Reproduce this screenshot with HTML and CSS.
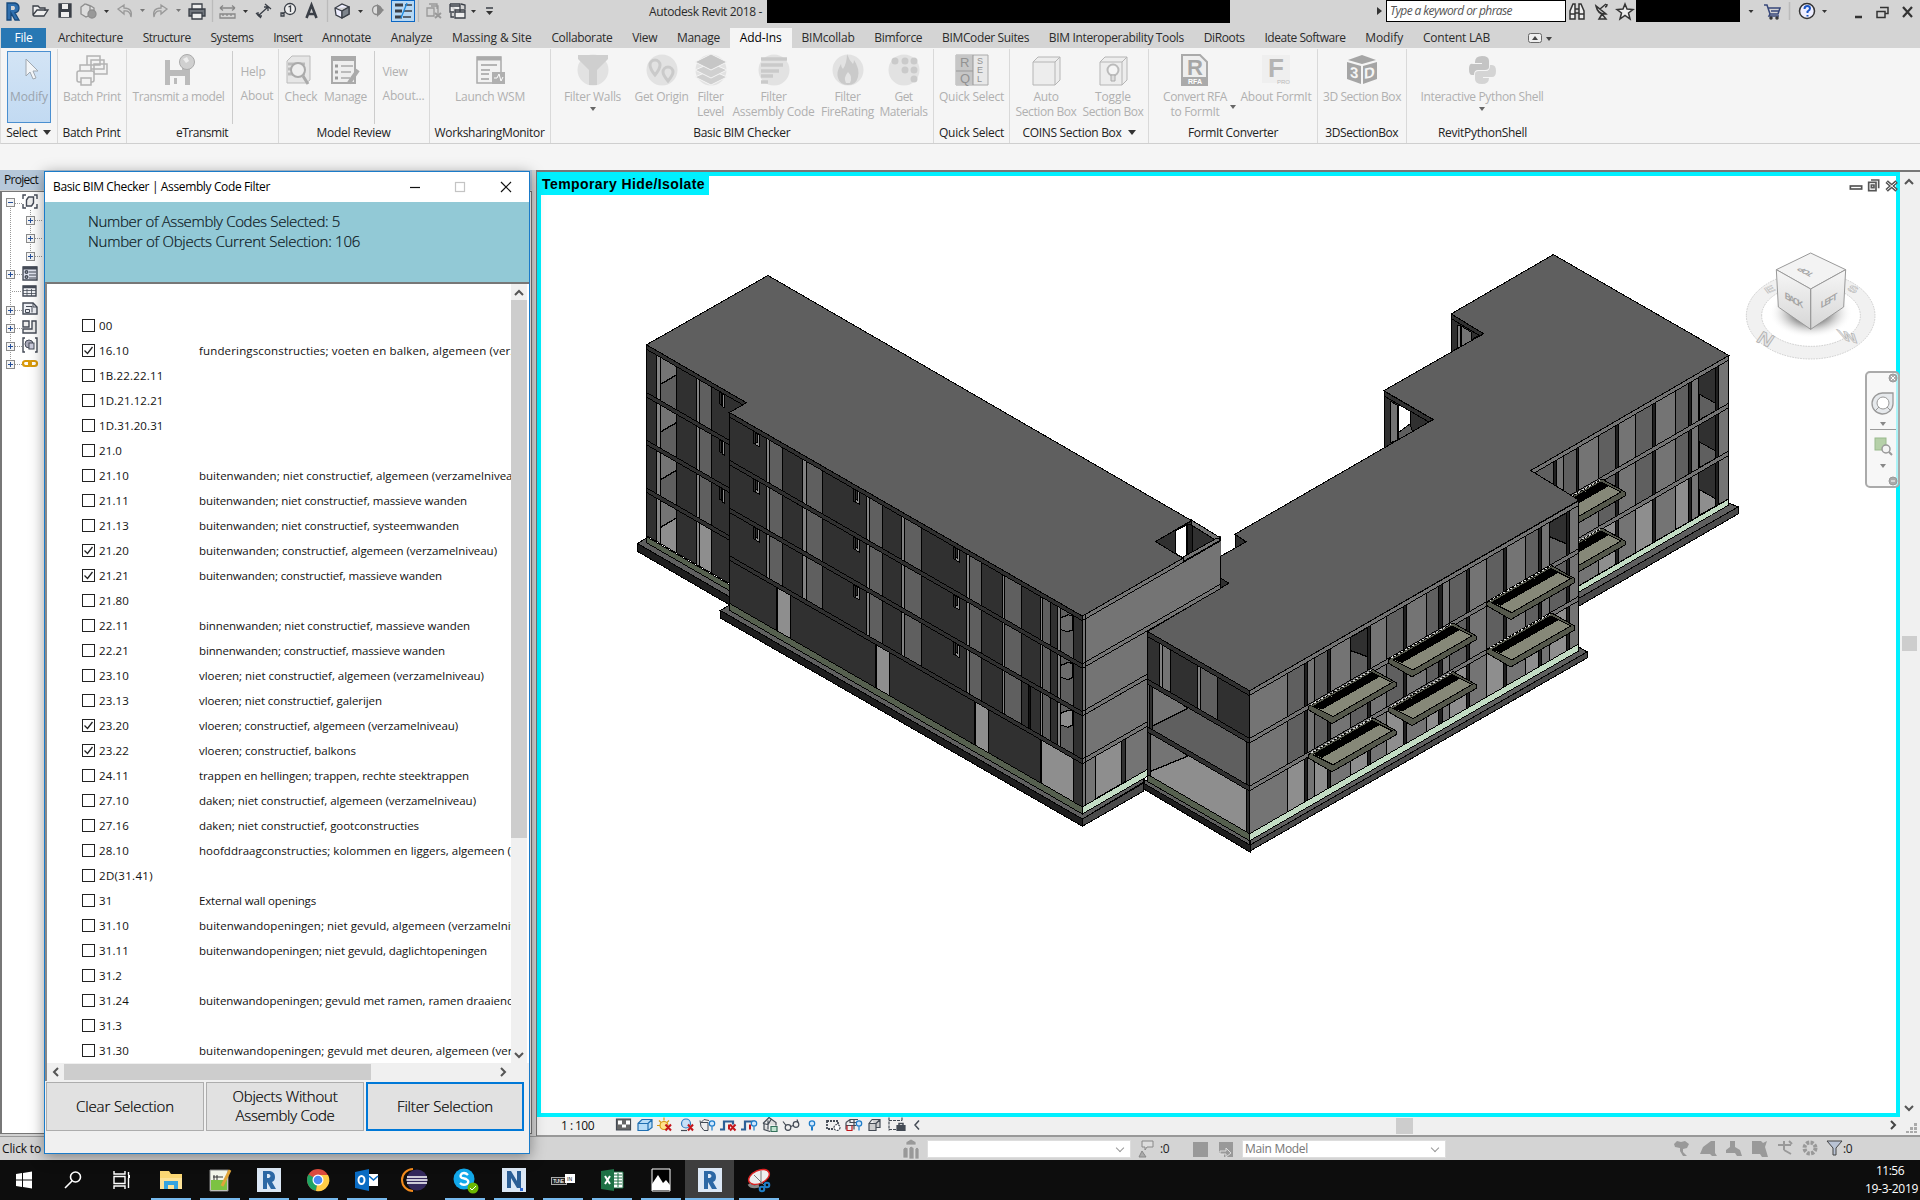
FILE: index.html
```html
<!DOCTYPE html>
<html lang="en">
<head>
<meta charset="utf-8">
<title>Autodesk Revit 2018</title>
<link rel="stylesheet" href="styles.css">
</head>
<body>
<header class="titlebar">
  <svg class="qat" width="510" height="28" viewBox="0 0 510 28" fill="none" stroke="#3a3f47" stroke-width="1.3">
    <path d="M7 3h8q4 1 4 5t-4 5l4 7h-4l-4-7v7H7z" fill="#2f6fae" stroke="#17497c"/><path d="M11 6h3q2 2 0 4h-3z" fill="#d4d4d4" stroke="none"/>
    <path d="M33 15V6h5l2 2h5v3M33 15l4-5h11l-4 6H34z" fill="#eee"/>
    <path d="M59 4h12v13H59z" fill="#3a3f47"/><path d="M62 4h6v5h-6zM61 12h8v5h-8z" fill="#eee" stroke="none"/>
    <g stroke="#8d8d8d"><path d="M81 7l4-3 5 2v9l-4 2-5-3zM86 4l5 2 3 2v8" fill="#ddd"/><circle cx="92" cy="14" r="4" fill="#999"/></g>
    <path d="M104 10h5l-2.500 3z" fill="#333" stroke="none"/>
    <path d="M124 5l-6 4 6 5v-3q6-1 7 6 2-9-7-9z" stroke="#999"/><path d="M140 9h5l-2.500 3z" fill="#777" stroke="none"/>
    <path d="M161 5l6 4-6 5v-3q-6-1-7 6-2-9 7-9z" stroke="#999"/><path d="M176 9h5l-2.500 3z" fill="#777" stroke="none"/>
    <path d="M189 9h16v7h-16z" fill="#70757c"/><path d="M192 4h10v5h-10zM192 13h10v6h-10z" fill="#eee"/>
    <path d="M212.500 0v22M327.500 0v22M418.500 0v22" stroke="#bbb"/>
    <g stroke="#888"><path d="M220 8h15M220 8l3-2.500M220 8l3 2.500M235 8l-3-2.500M235 8l-3 2.500M220 14h15v4h-15zM223 14v2M227 14v2M231 14v2"/></g><path d="M243 10h5l-2.500 3z" fill="#333" stroke="none"/>
    <path d="M258 16l10-9M256 13l5 5M265 4l6 5M258 16v-4M258 16h4M268 7h-4M268 7v4"/>
    <circle cx="290" cy="9" r="5.500" fill="#eee"/><path d="M288.500 7l2-1v6M285 12l-3 2M281 13v3h3v-3z" />
    <path d="M306.500 18l5-13 5 13M308.500 14h6" stroke-width="2.600"/>
    <path d="M335 8l7-4 7 3v7l-7 4-6-3zM335 8l7 3 7-4M342 11v7" fill="#eef"/><path d="M342 11l7-4v7l-7 4z" fill="#7d848c"/><path d="M358 10h5l-2.500 3z" fill="#333" stroke="none"/>
    <circle cx="377" cy="10" r="4.500" stroke="#888" fill="#ddd"/><path d="M377 4l7 6-7 7z" fill="#888" stroke="none"/>
    <rect x="391.500" y=".5" width="23" height="21" fill="#b5d7f3" stroke="#0b66c3" stroke-width="1"/><path d="M395 5h8M395 11h7M395 17h7" stroke-width="3"/><path d="M405 5h7M404 11h8M403 17h8"/><path d="M407 3l-6 15" stroke="#1989e0"/>
    <g stroke="#999"><path d="M429 4h8v5M427 8h7v8h-7zM431 6h7v8"/><path d="M435 13l6 5M441 13l-6 5" stroke-width="2"/></g>
    <path d="M450 4h10v8M450 4v8h4M455 10h10v8h-10zM450 6h10M455 12h10" fill="#eee"/><path d="M461 4l4 1v4M451 13v4h3"/><path d="M471 10h5l-2.500 3z" fill="#333" stroke="none"/>
    <path d="M486 8h7" stroke-width="1.500"/><path d="M486 11h7l-3.500 4z" fill="#333" stroke="none"/>
  </svg>
  <span class="apptitle"><span data-w="113">Autodesk Revit 2018 -</span></span>
  <span class="mask mask-doc"></span>
  <i class="more"></i>
  <span class="search"><em data-w="122">Type a keyword or phrase</em></span>
  <svg class="help" width="70" height="28" viewBox="1566 0 70 28" fill="none" stroke="#333" stroke-width="1.500">
    <path d="M1570 19v-8l3-7h2v15zM1579 19V4h2l3 7v8zM1575 9h4M1575 13h4M1570 14h5M1579 14h5" fill="#eee"/>
    <path d="M1596 6q2 9 10 8zM1600 9l6-5M1602 14l-3 5h7zM1605 7q2 0 2-3"/>
    <path d="M1625 4l2 5 6 .5-4.500 3.500 1.500 6-5-3.500-5 3.500 1.500-6-4.500-3.500 6-.5z" fill="#eee"/>
  </svg>
  <span class="mask mask-user"></span>
  <svg class="syst" width="180" height="28" viewBox="1740 0 180 28" fill="none" stroke="#333" stroke-width="1.500">
    <path d="M1748.500 10h5l-2.500 3z" fill="#333" stroke="none"/>
    <path d="M1764 5h3l3 9h8l2-6h-12M1770 14l-1 2h10M1771 11h8" stroke="#37477a"/><circle cx="1771" cy="18" r="1" fill="#37477a"/><circle cx="1777" cy="18" r="1"/>
    <path d="M1789.500 2v18" stroke="#bbb"/><circle cx="1807" cy="11" r="7.500" fill="#eef"/><path d="M1804.500 9q0-3 3-3 2.500 0 2.500 2.500 0 1.500-2.500 3v1.500M1807.500 15v1.500" stroke="#1b56c4" stroke-width="2"/>
    <path d="M1822 10h5l-2.500 3z" fill="#333" stroke="none"/><path d="M1855 17h7" stroke-width="2.500"/>
    <path d="M1880 7.500h8v6h-3M1877 11.500h8v6h-8z"/><path d="M1903 7l9 10M1912 7l-9 10" stroke-width="2.200"/>
  </svg>
</header>
<nav class="tabs" id="tabs"></nav>
<section class="ribbon" id="ribbon"></section>
<div class="optionsbar"></div>

<main class="work">
  <aside class="browser">
    <div class="browser-head"><span data-w="34">Project</span></div>
    <div class="browser-body">
      <svg width="42" height="190" viewBox="2 192 42 190" fill="none" stroke="#454b57" stroke-width="1.400" shape-rendering="crispEdges">
        <path d="M10.500 208v158M15 203h7M15 274h7M12 291h9M15 310h7M15 328h7M15 346h7M15 364h7M30.500 210v46M35 220h8M35 238h8M35 256h8" stroke="#999" stroke-dasharray="1 1" stroke-width="1"/>
        <g id="nodes"></g>
        <g shape-rendering="auto"><path d="M23 199v-4h3M34 195h3v4M23 204v4h3M34 208h3v-4"/><path d="M26.500 200l2-3h5v6l-2 3h-5z" fill="#eee"/>
        <path d="M23 267h14v13H23z" fill="#dfe2ee"/><path d="M23 268h14" stroke-width="3"/><circle cx="26.500" cy="272" r="1.300"/><circle cx="26.500" cy="277" r="1.300"/><path d="M29 272h7M29 275h7M29 278h7" stroke-width="1"/>
        <path d="M23 286h13v10H23z" fill="#f1f2f6"/><path d="M23 287h13" stroke-width="2.500"/><path d="M23 290.500h13M23 293.500h13M27 289v7M31.500 289v7" stroke-width=".8"/>
        <path d="M23 303h10l4 4v7H23z" fill="#eef0f5"/><path d="M25.500 309.500h4v3h-4zM26 306.500h6v6" stroke-width="1"/><path d="M33 303v4h4" stroke-width="1"/><path d="M23 321h6v6h-6zM32 321h4v12H23v-4h9z" fill="#eee"/>
        <path d="M25 338h-2v14h2M35 338h2v14h-2"/><circle cx="29" cy="344" r="4" fill="#aab" stroke-width="1"/><rect x="29" y="343" width="5" height="6" fill="#ccd" stroke-width="1"/></g>
        <g stroke="#d99a0b" stroke-width="2.200" shape-rendering="auto"><rect x="23" y="361" width="8" height="5" rx="2.500"/><rect x="29" y="361" width="8" height="5" rx="2.500"/></g>
      </svg>
    </div>
  </aside>
  <section class="view">
    <div class="canvas-row">
      <div class="canvas">
        <svg id="model" width="1356" height="937" viewBox="541 176 1356 937" shape-rendering="crispEdges"></svg>
        <span class="isolate"><b data-w="163">Temporary Hide/Isolate</b></span>
        <svg class="cube" width="240" height="170" viewBox="0 0 720 510">
          <defs><radialGradient id="sh"><stop offset=".4" stop-color="#888"/><stop offset="1" stop-color="#fff" stop-opacity="0"/></radialGradient>
          <linearGradient id="fc" x2="0" y2="1"><stop stop-color="#f6f6f6"/><stop offset="1" stop-color="#d6d6d6"/></linearGradient></defs>
          <g transform="translate(0,-130)">
          <g fill="none" stroke="#555" stroke-width="5"><rect x="511" y="79" width="34" height="9"/><rect x="566" y="68" width="22" height="25"/><path d="M573 61h23v25M574 76h8v8h-8z"/><path d="M620 66l30 26M650 66l-30 26" stroke-width="11"/><path d="M622 68l26 22M648 68l-26 22" stroke="#fff" stroke-width="3"/></g>
          <path d="M199 468a193 130 0 1 0 386 0a193 130 0 1 0-386 0zM245 468a148 92 0 1 1 296 0a148 92 0 1 1-296 0z" fill="#f1f1f1" stroke="#bbb" stroke-width="2" stroke-dasharray="5 3" fill-rule="evenodd"/>
          <ellipse cx="392" cy="460" rx="125" ry="75" fill="url(#sh)"/>
          <g class="compass"><text transform="matrix(1 .45 -.55 .8 226 545)">N</text><text transform="matrix(1 .25 .5 .8 488 540)">W</text><text transform="matrix(.7 -.3 .3 .4 262 402)">E</text><text transform="matrix(.7 .3 -.3 .4 500 390)">S</text></g>
          <g stroke="#999" stroke-width="3"><path d="M392 280l105 50-105 58-103-58z" fill="#f3f3f3"/><path d="M289 330l103 58v121l-97-67zM497 330l-105 58v121l99-67z" fill="url(#fc)"/></g>
          <g class="face"><text transform="matrix(.9 .5 0 1 314 416)" textLength="62">BACK</text><text transform="matrix(.9 -.5 0 1 422 446)" textLength="56">LEFT</text><text transform="matrix(-.8 -.42 .8 -.42 404 343)" textLength="50">TOP</text></g></g>
        </svg>
        <svg class="navbar" width="36" height="118" viewBox="0 0 36 118" fill="none" stroke="#999">
          <rect x="1" y="1" width="33" height="115" rx="4" fill="#f4f4f4" fill-opacity=".7" stroke="#aaa" stroke-width="2"/>
          <circle cx="28" cy="7" r="4" fill="#aaa"/><path d="M26 5l4 4M30 5l-4 4" stroke="#fff"/><circle cx="28" cy="110" r="4" fill="#aaa"/><path d="M26 110h4" stroke="#fff"/>
          <path d="M18 22h10v11a10.500 10.500 0 1 1-10-11z" fill="#e6e9ec" stroke-width="1.300"/><circle cx="18" cy="32" r="6" fill="#fff"/><path d="M14 36l-4 4M22 36l4 4"/>
          <path d="M15 51h6l-3 4zM15 93h6l-3 4z" fill="#888" stroke="none"/><path d="M5 58.500h26"/><rect x="10" y="67" width="11" height="12" fill="#b5d0a8" stroke="#9aba8d"/><circle cx="21" cy="78" r="4" fill="#f4f4f4" stroke-width="1.500"/><path d="M24 81l3 3" stroke-width="2"/>
        </svg>
      </div>
      <div class="vscroll"><svg width="20" height="945" viewBox="0 0 20 945" fill="none" stroke="#555" stroke-width="2"><path d="M5 12l4-4 4 4M5 934l4 4 4-4"/><rect x="2" y="464" width="15" height="15" fill="#cdcdcd" stroke="none"/></svg></div>
    </div>
    <div class="viewctl">
      <span class="scale"><span data-w="33">1 : 100</span></span>
      <svg width="320" height="18" viewBox="610 1116.500 320 18" fill="none" stroke="#444b55" stroke-width="1.200">
        <path d="M616.500 1118.500h14v11h-14z" fill="#666"/><path d="M618 1120h4v4h-4zM626 1120h4v4h-4zM622 1124h4v3h-4z" fill="#fff" stroke="none"/>
        <path d="M638 1123l4-4h10v8l-4 3h-10zM638 1123h10v7M648 1123l4-4" fill="#b7dcf7" stroke="#1f6fb2"/>
        <circle cx="664" cy="1125" r="4" fill="#ffe28a" stroke="#d79a12"/><path d="M664 1117v3M657 1125h3M659 1120l2 2M669 1120l-2 2" stroke="#d79a12"/>
        <circle cx="686" cy="1123" r="4.500" fill="#c8e0f7" stroke="#2c7ac0"/><path d="M681 1130h6"/>
        <path d="M700 1120l1 6 3 4h4v-8h-7l3-3 5 1" fill="#eee" stroke-width="1"/><path d="M720 1129h4v-8h9v3M741 1129h4v-8h9v3" stroke="#2c5f96" stroke-width="2.200"/><path d="M729 1129v-5M750 1129v-5" stroke="#c4161c" stroke-width="2"/>
        <g stroke="#c4161c" stroke-width="2"><path d="M665.500 1124l5.500 6M671 1124l-5.500 6M688 1124l5 6M693 1124l-5 6M730 1124l5.500 6M735.500 1124l-5.500 6"/></g>
        <g stroke="#1c7cc9" fill="#cfe8ff"><circle cx="712" cy="1123" r="2.700"/><path d="M712 1126v4"/><circle cx="754" cy="1123" r="2.700"/><path d="M754 1126v4"/><circle cx="812" cy="1123" r="2.700"/><path d="M812 1126v4" stroke-width="2"/></g>
        <path d="M763 1123l6-6 7 5v3M764 1123v6l6 2M768 1120v9M763 1123l5 1 3-5" fill="#ddd"/><path d="M771 1126h6v5h-6z" fill="#bfe3cf" stroke="#33705a"/>
        <circle cx="788" cy="1127" r="2.800"/><circle cx="796" cy="1124" r="2.800"/><path d="M783 1121l3 4M798 1122l-1-3M791 1126l2-1"/>
        <path d="M827 1120.500h11v8h-11z" stroke-dasharray="2 1" stroke-width="1.800"/><circle cx="837" cy="1127" r="3" fill="#fff" stroke-dasharray="2 1"/>
        <path d="M846 1122l4-3h8M846 1122v7M850 1119v3h8M854 1119v10M846 1125h10" /><path d="M847 1125v5h5v-5" stroke="#c4161c"/><circle cx="859" cy="1123" r="2.700" fill="#cfe8ff" stroke="#1c7cc9"/><path d="M859 1126v4" stroke="#1c7cc9"/>
        <path d="M869 1123h7v7h-7zM872 1119h8v8h-4M869 1123l3-4M876 1123l4-4" fill="#ccc"/>
        <path d="M889 1117v13M889 1120h13M902 1117v4M889 1129h7" stroke-dasharray="3 1"/><path d="M897 1125h8v5h-8z" fill="#444b55"/><path d="M899 1125v-2h4v2M919 1120l-4 4.500 4 4.500" stroke-width="1.500"/>
      </svg>
      <span class="hthumb"></span>
      <svg class="grip" width="30" height="18" fill="#aaa"><path d="M1 4l4 4-4 4" fill="none" stroke="#444" stroke-width="2"/><path d="M24 6h3v3h-3zM20 10h3v3h-3zM24 10h3v3h-3zM16 14h3v2h-3zM20 14h3v2h-3zM24 14h3v2h-3z"/></svg>
    </div>
  </section>

  <div class="dialog">
    <div class="dlg-title"><span data-w="217">Basic BIM Checker | Assembly Code Filter</span>
      <svg width="110" height="20" fill="none" stroke="#111" stroke-width="1.200"><path d="M3 10.500h10"/><rect x="48.500" y="5.500" width="9" height="9" stroke="#c4c4c4"/><path d="M94 5l10 10M104 5l-10 10"/></svg></div>
    <div class="dlg-info"><p><span data-w="252">Number of Assembly Codes Selected: 5</span></p><p><span data-w="272">Number of Objects Current Selection: 106</span></p></div>
    <div class="dlg-list">
      <div class="rows" id="rows"></div>
      <div class="lv"><svg width="16" height="16"><path d="M4 11l4-4 4 4" fill="none" stroke="#555" stroke-width="2"/></svg><span class="lthumb"></span><svg width="16" height="16"><path d="M4 6l4 4 4-4" fill="none" stroke="#555" stroke-width="2"/></svg></div>
    </div>
    <div class="lh"><svg width="17" height="16"><path d="M11 4L7 8l4 4" fill="none" stroke="#555" stroke-width="2"/></svg><span></span><svg class="end" width="17" height="16"><path d="M6 4l4 4-4 4" fill="none" stroke="#555" stroke-width="2"/></svg></div>
    <div class="dlg-buttons"><button><span data-w="98">Clear Selection</span></button><button><span data-w="105">Objects Without</span><br><span data-w="99">Assembly Code</span></button><button class="default"><span data-w="96">Filter Selection</span></button></div>
  </div>
</main>

<footer class="status">
  <span class="hint"><span data-w="39">Click to</span></span>
  <svg class="s1" width="18" height="22" viewBox="0 0 18 22" fill="#999" stroke="#ddd" stroke-width=".7"><path d="M1 11l2-2 3 1v10H1zM7 10l2-2 3 2v11H7zM13 11l2-2 2 2v10h-4z"/><path d="M4 4l5-3 5 3v3H4z"/></svg>
  <span class="combo c1"><i></i></span>
  <svg class="s2" width="18" height="22" fill="#aaa" stroke="#888"><path d="M4 3h11v6H9l-2 3V9H4z" fill="#ddd"/><path d="M1 19l3-6 4 6z"/></svg>
  <span class="zero">:0</span>
  <svg class="s3" width="46" height="22" fill="#999"><path d="M1 4h15v15H1zM27 4h14v15h-9v-4h-5z"/><path d="M28 13h6v-3l5 5-5 4v-3h-6z" stroke="#ddd"/></svg>
  <span class="combo c2"><span data-w="63">Main Model</span><i></i></span>
  <svg class="s4" width="172" height="22" viewBox="1674 1138 172 22" fill="#999"><path d="M1675 1144l3-3 4 1 4-1 4 3-2 4-4 1v3l4 4h-4l-3-5v-3l-5-1zM1701 1154l3-7 8-6h4v12l2 3h-5l-2-2zM1727 1150l4-3v-6h5v6l5 3 2 6h-5l-2-3h-9zM1753 1141h9l2 2 4-2-2 6 3 10h-6l-2-3h-8z"/><path d="M1779 1145h13M1785 1141v9M1790 1141l3 3M1785 1150l7 4" stroke="#999" stroke-width="2"/><circle cx="1811" cy="1148" r="5.500" fill="none" stroke="#999" stroke-width="4" stroke-dasharray="3 1.300"/><path d="M1828 1141h15l-6 7v7h-3v-7z" fill="#b9c3d4" stroke="#444"/></svg>
  <span class="zero">:0</span>
</footer>

<footer class="taskbar">
  <span class="app"><svg viewBox="0 0 40 40" fill="#fff"><path d="M12 14l6-1v6.500h-6zM19 13l9-1.500v8h-9zM12 20.500h6V27l-6-1zM19 20.500h9v8L19 27z"/></svg></span>
  <span class="app"><svg viewBox="0 0 40 40" fill="none" stroke="#fff" stroke-width="1.600"><circle cx="22.500" cy="17" r="5"/><path d="M19 21l-7 7"/></svg></span>
  <span class="app"><svg viewBox="0 0 40 40" fill="none" stroke="#fff" stroke-width="1.400"><path d="M12 11v3h11v-3M12 16.500h11v7H12zM12 29v-3h11v3M26.500 12v3M26.500 18v10" /><path d="M26 16.500h2" stroke-width="3"/></svg></span>
  <span class="app open"><svg viewBox="0 0 40 40"><path d="M9 11h9l2 3h11v15H9z" fill="#fbd774"/><path d="M9 18h22v11H9z" fill="#fde398"/><path d="M13 29v-8h14v8h-4v-4h-6v4z" fill="#35a4e0"/></svg></span>
  <span class="app open"><svg viewBox="0 0 40 40"><path d="M10 10h18v21H10z" fill="#f3f6ea" stroke="#888"/><path d="M11 20h16v10H11z" fill="#7cc242"/><path d="M13 17h10M14 15v5M17 15v5" stroke="#333"/><path d="M22 26l8-16" stroke="#e0a53a" stroke-width="3"/></svg></span>
  <span class="app open"><svg viewBox="0 0 40 40"><path d="M8 8h24v24H8z" fill="#dce8f6"/><path d="M14 11h7q5 1 5 6 0 4-3 5l4 7h-5l-4-7v7h-4z" fill="#2c68a5"/><path d="M18 14h2q3 2 0 4h-2z" fill="#dce8f6"/></svg></span>
  <span class="app open"><svg viewBox="0 0 40 40"><circle cx="20" cy="20" r="11" fill="#dd4b3e"/><path d="M20 20l-9.500-5.500A11 11 0 0 0 18 30.800z" fill="#1da462"/><path d="M20 20l-2 10.900A11 11 0 0 0 30 15H20z" fill="#ffcd46"/><circle cx="20" cy="20" r="5.500" fill="#fff"/><circle cx="20" cy="20" r="4.300" fill="#4a8af4"/></svg></span>
  <span class="app open"><svg viewBox="0 0 40 40"><path d="M8 12l14-3v22L8 28z" fill="#0a6cc4"/><path d="M22 14h9v12h-9z" fill="#fff"/><path d="M22 16l4.500 4 4.500-4" stroke="#0a6cc4" stroke-width="1.600" fill="none"/><ellipse cx="14.500" cy="20" rx="3" ry="4" fill="none" stroke="#fff" stroke-width="2"/></svg></span>
  <span class="app"><svg viewBox="0 0 40 40"><path d="M17 9a11 11 0 0 0 0 22" fill="none" stroke="#f28a1c" stroke-width="2"/><circle cx="21" cy="20" r="10.500" fill="#33285c"/><path d="M11 17h20M10.500 20h21M11 23h20" stroke="#fff" stroke-width="1.700"/></svg></span>
  <span class="app open"><svg viewBox="0 0 40 40"><circle cx="19" cy="19" r="10.500" fill="#12a8ea"/><path d="M23 15q-3-3-6-1.500-3 2.500 0 4.500l4 1q4 2 1 5-4 2-7-1" stroke="#fff" stroke-width="2.400" fill="none"/><circle cx="28" cy="28" r="5.500" fill="#6bb700"/><path d="M25 28l2 2 4-4" stroke="#fff" fill="none"/></svg></span>
  <span class="app open"><svg viewBox="0 0 40 40"><path d="M8 8h24v24H8z" fill="#dce8f6"/><path d="M13 28V11h4l6 10V11h4v17h-4l-6-10v10z" fill="#2c5f96"/><path d="M26 28h3v3h-3z" fill="#2c68d5"/></svg></span>
  <span class="app open"><svg viewBox="0 0 40 40"><rect x="8.500" y="17.500" width="15" height="7" fill="#222" stroke="#aaa"/><rect x="22" y="14" width="10" height="9" fill="#fff"/><text x="10" y="23.200" font-size="5" fill="#fff" textLength="11">TUNE</text><text x="24" y="20.500" font-size="5">IN</text></svg></span>
  <span class="app open"><svg viewBox="0 0 40 40"><path d="M20 12h11v16H20z" fill="#fff" stroke="#1e7145"/><path d="M22 15h8M22 18h8M22 21h8M22 24h8M26 13v14" stroke="#1e7145"/><path d="M9 11l13-2v22L9 29z" fill="#1e7145"/><path d="M13 16l5 8M18 16l-5 8" stroke="#fff" stroke-width="2"/></svg></span>
  <span class="app open"><svg viewBox="0 0 40 40"><path d="M11 9h18v22H11z" fill="#000" stroke="#fff"/><path d="M11 30V24l6-9 5 8 3-3 4 5v5z" fill="#fff"/></svg></span>
  <span class="app open active"><svg viewBox="0 0 40 40"><path d="M8 8h24v24H8z" fill="#dce8f6"/><path d="M14 11h7q5 1 5 6 0 4-3 5l4 7h-5l-4-7v7h-4z" fill="#2c68a5"/><path d="M18 14h2q3 2 0 4h-2z" fill="#dce8f6"/></svg></span>
  <span class="app open"><svg viewBox="0 0 40 40"><ellipse cx="20" cy="17" rx="11" ry="6.500" transform="rotate(-25 20 17)" fill="#eee" stroke="#d22" stroke-width="1.500"/><path d="M10 24q2 4 10 2" stroke="#888" stroke-width="3" fill="none"/><path d="M15 15l10 10M22 11v13" stroke="#777"/><circle cx="23" cy="29" r="2.300" fill="none" stroke="#1f7fc9" stroke-width="2"/><circle cx="28" cy="25" r="2.300" fill="none" stroke="#1f7fc9" stroke-width="2"/></svg></span>
  <div class="clock"><span data-w="28">11:56</span><span data-w="53">19-3-2019</span></div>
</footer>
<script src="app.js"></script>
</body>
</html>
```
FILE: styles.css
```css
* { box-sizing: border-box; }
body { margin: 0; width: 1920px; height: 1200px; overflow: hidden; display: flex; flex-direction: column; font: 12px/16px "Open Sans", "Noto Sans", sans-serif; color: #2b2b2b; background: #f5f5f5; }
svg { display: block; flex: none; }
[data-w] { white-space: nowrap; display: inline-block; }
.titlebar { height: 28px; background: #d4d4d4; display: flex; align-items: flex-start; }
.apptitle { margin-left: 139px; width: 118px; padding-top: 4px; }
.mask { background: #000; height: 23px; flex: none; }
.mask-doc { width: 463px; }
.mask-user { width: 104px; height: 22px; }
.more { margin: 7px 3px 0 147px; border-left: 5px solid #333; border-top: 4px solid transparent; border-bottom: 4px solid transparent; }
.titlebar .search { width: 180px; height: 22px; border: 1px solid #000; background: #fff; padding: 2px 3px; color: #555; margin-left: 1px; flex: none; }
.tabs { height: 20px; background: #d4d4d4; display: flex; padding-left: 1px; }
.tab { padding: 2px 9.900px 0; height: 20px; flex: none; }
.tab.file { background: #2878b4; color: #fff; width: 45px; text-align: center; margin-right: 2px; }
.tab.active { background: #f5f5f5; color: #000; }
.tab-more { margin: 4px 0 0 28px; }
.ribbon { height: 96px; display: flex; border-bottom: 1px solid #cfcfcf; border-left: 1px solid #ddd; }
.panel { height: 94px; margin-top: 1px; border-right: 1px solid #d9d9d9; flex: none; display: flex; flex-direction: column; }
.panel:last-child { border: 0; }
.tools { height: 75px; display: flex; }
.panel-title { text-align: center; height: 19px; line-height: 17px; color: #222; }
.tool { flex: none; color: #b0b0b0; display: flex; flex-direction: column; align-items: center; line-height: 15px; padding-top: 5px; text-align: center; white-space: nowrap; }
.tool svg { margin-bottom: 3px; }
.tool.selected { border: 1px solid #4a8fd0; background: linear-gradient(#d3e4f5, #c2daf2); margin: 2px 0 1px 6px; padding-top: 2px; color: #9aa4ae; }
.stack { border-left: 1px solid #ccc; margin-top: 2px; padding: 13px 0 0 8px; color: #b0b0b0; display: flex; flex-direction: column; align-items: flex-start; gap: 8px; }
.caret { display: inline-block; border-top: 4px solid #666; border-left: 3px solid transparent; border-right: 3px solid transparent; }
.panel-title .caret { border-width: 5px 4px 0; border-top-color: #333; margin: 0 0 2px 6px; }
.tool .caret { margin-top: 3px; }
.optionsbar { height: 26px; }
.work { height: 966px; display: flex; position: relative; }
.browser { width: 537px; background: #d2d2d2; border-right: 1px solid #777; padding-right: 4px; }
.browser-head { height: 20px; background: #b6c8da; padding: 2px 0 0 4px; color: #111; }
.browser-body { height: 943px; margin-top: 1px; background: #fff; border: 1px solid #777; border-left-width: 2px; }
.view { flex: 1; border-top: 2px solid #777; }
.canvas-row { display: flex; height: 945px; }
.canvas { width: 1363px; height: 945px; border: 4px solid #00f0ff; background: #fff; position: relative; }
.isolate { position: absolute; left: -4px; top: -4px; width: 172px; height: 23px; background: #00f0ff; color: #000; padding: 3px 0 0 5px; font: 14px/18px "Liberation Sans", Arial, sans-serif; }
.cube { position: absolute; left: 1139px; top: 27px; overflow: visible; }
.navbar { position: absolute; left: 1324px; top: 195px; }
.face text { font: bold 28px "Liberation Sans", sans-serif; fill: #a4a4a4; }
.compass text { font: bold 56px "Liberation Sans", sans-serif; fill: #e4e4e4; stroke: #aaa; stroke-width: 2; }
.vscroll { flex: 1; background: #f0f0f0; }
.viewctl { height: 19px; display: flex; background: #f0f0f0; border-bottom: 1px solid #999; }
.scale { width: 73px; padding: 1px 0 0 24px; color: #111; }
.hthumb { width: 17px; height: 16px; background: #cdcdcd; margin: 1px 0 0 466px; }
.grip { margin-left: auto; }
.dialog { position: absolute; left: 44px; top: 1px; width: 486px; height: 983px; z-index: 5; background: #f0f0f0; border: 1px solid #1a7bc9; box-shadow: 0 3px 14px rgba(0,0,0,.4); }
.dlg-title { height: 30px; background: #fff; color: #000; display: flex; justify-content: space-between; align-items: center; padding: 0 12px 0 8px; }
.dlg-info { height: 80px; background: #92c9d6; padding: 9px 0 0 43px; color: #0c171d; font-size: 15px; font-weight: 300; -webkit-text-stroke: .2px #0c171d; }
.dlg-info p { margin: 0; line-height: 20px; }
.dlg-list { height: 781px; border-top: 2px solid #777; border-left: 2px solid #888; display: flex; background: #fff; }
.rows { width: 464px; overflow: hidden; padding-top: 29px; font-size: 11.500px; color: #111; }
.row { height: 25px; display: flex; align-items: center; padding-left: 35px; white-space: nowrap; }
.box { width: 13px; height: 13px; border: 1px solid #222; margin-right: 4px; flex: none; }
.code { width: 100px; flex: none; }
.lv { width: 16px; background: #f0f0f0; display: flex; flex-direction: column; justify-content: space-between; }
.lthumb { height: 538px; margin-bottom: 209px; background: #cdcdcd; display: block; }
.lh { display: flex; height: 18px; border-left: 2px solid #888; padding-top: 1px; }
.lh span { width: 307px; background: #cdcdcd; height: 16px; }
.lh .end { margin-left: 124px; }
.dlg-buttons { display: flex; gap: 2px; padding: 1px 0 0 1px; }
.dlg-buttons button { width: 158px; height: 49px; background: #e1e1e1; border: 1px solid #adadad; font: 300 15px/19px "Open Sans", sans-serif; padding: 0 0 1px; color: #000; -webkit-text-stroke: .2px #000; }
.dlg-buttons .default { border: 2px solid #0078d7; }
.status { height: 24px; background: #d4d4d4; border-top: 1px solid #999; display: flex; align-items: center; color: #222; }
.hint { width: 902px; padding-left: 2px; color: #111; }
.combo { background: #fff; height: 18px; border: 1px solid #ddd; display: flex; justify-content: space-between; color: #777; line-height: 15px; padding: 0 7px 0 2px; }
.combo i { width: 6px; height: 6px; border: solid #999; border-width: 0 1px 1px 0; transform: rotate(45deg); margin-top: 4px; margin-left: auto; }
.c1 { width: 204px; margin-left: 7px; margin-right: 7px; }
.c2 { width: 204px; margin-left: 4px; }
.s3 { margin-left: 22px; }
.zero { width: 10px; margin-left: 4px; letter-spacing: -.5px; }
.s4 { margin-left: 227px; }
.s4 + .zero { margin-left: -2px; }
.taskbar { height: 40px; background: #0d0d0d; display: flex; padding-left: 2px; }
.app { width: 49px; height: 40px; display: flex; justify-content: center; flex: none; padding-right: 6px; }
.app svg { width: 40px; height: 40px; font-family: "Liberation Sans", sans-serif; }
.app.open { background: linear-gradient(#76b9ed, #76b9ed) center bottom / 40px 2px no-repeat content-box; }
.app.active { background: #3e3e3e; box-shadow: inset 0 -2px #76b9ed; margin-left: -3px; padding: 0 3px; margin-right: 3px; }
.clock { margin-left: auto; width: 70px; padding-top: 2px; display: flex; flex-direction: column; align-items: center; color: #fff; line-height: 17.500px; padding-left: 7px; }
.clock span:last-child { margin-left: 6px; }
.clock span:first-child { margin-left: 3px; }
```
FILE: app.js
```js
const $ = id => document.getElementById(id);

/* Ribbon tabs: label and text width */
const tabs = [['File', 18], ['Architecture', 65], ['Structure', 48], ['Systems', 43], ['Insert', 29], ['Annotate', 49], ['Analyze', 41.5], ['Massing &amp; Site', 79.5], ['Collaborate', 61], ['View', 25], ['Manage', 43], ['Add-Ins', 42], ['BIMcollab', 53], ['Bimforce', 48], ['BIMCoder Suites', 87], ['BIM Interoperability Tools', 135], ['DiRoots', 41], ['Ideate Software', 81], ['Modify', 38], ['Content LAB', 67]];
$('tabs').innerHTML = tabs.map(([t, w]) => `<span class="tab ${t === 'File' ? 'file' : t === 'Add-Ins' ? 'active' : ''}"><span data-w="${w}">${t}</span></span>`).join('') +
  '<svg class="tab-more" width="32" height="13"><rect x=".5" y="1.500" width="13" height="9" rx="2" fill="#eee" stroke="#666"/><path d="M4 8l3-4 3 4zM18 5h6l-3 4z" fill="#444"/></svg>';

const disc = '<circle cx="16" cy="16" r="15.500" fill="#e2e2e2"/>';
const boxShape = '<path d="M3 8l5-5h22v23l-5 5H3zM3 8h22v23M25 8l5-5" fill="#ededed" stroke="#b5b5b5"/>';
const icons = {
  cursor: '<path d="M13 5v17l4-4 3 7 3-1-3-7h5z" fill="#f2f5f8" stroke="#a0a8b0"/>',
  batch: '<g fill="#f3f3f3" stroke="#b3b3b3" stroke-width="1.500"><path d="M11 2h13v9H11zM15 6h13v9H15zM18 10h13v10H18zM4 11h11v8H4z"/><rect x="1" y="17" width="17" height="11" rx="2"/><path d="M5 24h10v7H5z"/></g>',
  transmit: '<path d="M2 6h25v25H2z" fill="#bbb"/><path d="M7 6h12v10H7zM7 22h15v9H7z" fill="#f5f5f5"/><path d="M11 24h3v6h-3z" fill="#bbb"/><circle cx="24" cy="8" r="7.500" fill="#d0d0d0" stroke="#aaa"/><path d="M20 5l4-2 2 4-3 2z" fill="#eee"/>',
  check: '<path d="M2 7l5-5h18v24l-4 3H2z" fill="#e6e6e6" stroke="#bbb"/><path d="M3 10h17M3 15h17M3 20h17" stroke="#bbb" stroke-width="3"/><circle cx="13" cy="16" r="7" fill="#eee" stroke="#aaa" stroke-width="2"/><path d="M18 22l5 8" stroke="#aaa" stroke-width="3"/>',
  manage: '<path d="M2 3h23v26H2z" fill="#eee" stroke="#aaa" stroke-width="2"/><path d="M2 5h23" stroke="#aaa" stroke-width="4"/><path d="M5 12h3M5 18h3M5 24h3" stroke="#999" stroke-width="3"/><path d="M11 12h12M11 18h10M11 24h9" stroke="#bbb" stroke-width="2"/><path d="M19 29l9-13" stroke="#aaa" stroke-width="4"/>',
  wsm: '<path d="M3 3h24v26H3z" fill="#f2f2f2" stroke="#aaa" stroke-width="1.500"/><path d="M3 4.500h24" stroke="#aaa" stroke-width="4"/><path d="M7 11h16M7 16h9M7 20h8M7 25h8" stroke="#b5b5b5" stroke-width="2"/><path d="M18 18h13v12H18z" fill="#b0b0b0"/><path d="M20 24h3l2-4 2 7 2-4" fill="none" stroke="#fff"/>',
  funnel: disc + '<path d="M1 1h30v4L20 16v15h-8V16L1 5z" fill="#cfcfcf"/>',
  origin: disc + '<g fill="none" stroke="#cacaca" stroke-width="3"><path d="M9 21q-5-6-5-10a5 5 0 0 1 10 0q0 4-5 10zM22 27q-5-6-5-9a5 5 0 0 1 10 0q0 3-5 9z"/></g>',
  level: disc + '<g fill="#d0d0d0" stroke="#f5f5f5"><path d="M0 23l16-7 16 7-16 8z"/><path d="M0 16l16-7 16 7-16 8z"/><path d="M0 8l16-8 16 8-16 8z" fill="#c6c6c6"/></g>',
  assembly: disc + '<path d="M3 5h26M3 11h22M3 17h18M3 22h12M3 28h7" stroke="#cacaca" stroke-width="3.500"/>',
  fire: disc + '<path d="M15 0q2 6 6 10 1-2 1-4 6 9 4 17-2 8-10 8T6 24q-2-6 3-14 0 3 2 5 4-6 4-15z" fill="#cacaca"/><path d="M16 18q5 5 2 11h-4q-3-5 2-11z" fill="#e4e4e4"/>',
  materials: disc + '<g fill="#cacaca"><circle cx="7" cy="7" r="3.500"/><circle cx="17" cy="7" r="3.500"/><circle cx="26" cy="7" r="3.500"/><circle cx="17" cy="16" r="3.500"/><circle cx="26" cy="16" r="3.500"/><circle cx="26" cy="25" r="3.500"/></g>',
  quick: '<path d="M0 1h32v30H0z" fill="#e8e8e8" stroke="#aaa"/><path d="M0 1h17v30H0z" fill="#c6c6c6"/><path d="M0 17h17M17 1v30" stroke="#999"/><g font-family="Liberation Sans" fill="#929292"><text x="4" y="13" font-size="13">R</text><text x="4" y="29" font-size="13">Q</text><text x="21" y="10" font-size="9">S</text><text x="21" y="19" font-size="9">E</text><text x="21" y="28" font-size="9">L</text></g>',
  box: boxShape,
  toggle: boxShape + '<circle cx="16" cy="16" r="5.500" fill="#f5f5f5" stroke="#bbb" stroke-width="2"/><path d="M14 21h4v6h-4z" fill="#ddd" stroke="#aaa"/>',
  rfa: '<path d="M3 1h18l7 7v23H3z" fill="#eee" stroke="#aaa" stroke-width="2"/><path d="M3 23h25v8H3z" fill="#aaa"/><text x="8" y="21" font-family="Liberation Sans" font-weight="bold" font-size="22" fill="#a6a6a6">R</text><text x="9" y="30" font-family="Liberation Sans" font-weight="bold" font-size="7" fill="#fff">RFA</text>',
  formit: '<path d="M2 1h28v28H2z" fill="#efefef"/><text x="8" y="23" font-family="Liberation Sans" font-weight="bold" font-size="26" fill="#b4b4b4">F</text><text x="17" y="30" font-family="Liberation Sans" font-size="6" fill="#bbb">PRO</text>',
  cube3d: '<path d="M2 6l14-5 14 5-14 4z" fill="#a5a5a5"/><path d="M1 8l14 4v18L1 25zM31 8l-14 4v18l14-5z" fill="#a5a5a5"/><g font-family="Liberation Sans" font-weight="bold" font-size="15" fill="#f5f5f5"><text transform="matrix(1 .2 0 1 4 23)">3</text><text transform="matrix(1 -.2 0 1 18 25)">D</text></g>',
  python: '<path d="M9 8q0-6 7-6t7 5v6q0 3-4 3h-7q-4 0-4 5H6q-3 0-3-6t4-5h9V9H9z" fill="#c4c4c4"/><path d="M23 24q0 6-7 6t-7-5v-5q0-3 4-3h7q4 0 4-6h2q4 0 4 6t-4 6h-9v1h6z" fill="#d4d4d4"/>'
};
const T = (icon, w, lines, opt = {}) => ({ icon, w, lines, ...opt });
/* Ribbon panels: title, title text width, panel width, tools, side stack */
const panels = [
  ['Select', 31, 56.5, [T('cursor', 44, [['Modify', 38]], { sel: 1 })], null, 1],
  ['Batch Print', 58, 69, [T('batch', 69, [['Batch Print', 58]])]],
  ['eTransmit', 52, 152, [T('transmit', 104, [['Transmit a model', 92]])], [['Help', 25], ['About', 33]]],
  ['Model Review', 74, 151, [T('check', 45, [['Check', 33]]), T('manage', 44, [['Manage', 43]]), ], [['View', 25], ['About...', 42]]],
  ['WorksharingMonitor', 110, 121, [T('wsm', 121, [['Launch WSM', 70]])]],
  ['Basic BIM Checker', 97, 383.5, [T('funnel', 84, [['Filter Walls', 57]], { caret: 1 }), T('origin', 54, [['Get Origin', 54]]), T('level', 44, [['Filter', 26], ['Level', 27]]), T('assembly', 82, [['Filter', 26], ['Assembly Code', 82]]), T('fire', 66, [['Filter', 26], ['FireRating', 53]]), T('materials', 46, [['Get', 18], ['Materials', 48]])]],
  ['Quick Select', 65, 76, [T('quick', 75, [['Quick Select', 65]])]],
  ['COINS Section Box', 99, 139, [T('box', 72, [['Auto', 25], ['Section Box', 61]]), T('toggle', 62, [['Toggle', 36], ['Section Box', 61]])], null, 1],
  ['FormIt Converter', 90, 169, [T('rfa', 92, [['Convert RFA', 64], ['to FormIt', 49]], { side: 1 }), T('formit', 70, [['About FormIt', 71]])]],
  ['3DSectionBox', 73, 88.5, [T('cube3d', 88, [['3D Section Box', 78]])]],
  ['RevitPythonShell', 89, 152, [T('python', 151, [['Interactive Python Shell', 123]], { caret: 1 })]]
];
$('ribbon').innerHTML = panels.map(([title, tw, pw, tools, stack, drop]) => `<div class="panel" style="width:${pw}px"><div class="tools">` +
  tools.map(t => `<div class="tool ${t.sel ? 'selected' : ''}" style="width:${t.w}px"><svg width="32" height="32" viewBox="0 0 32 32" overflow="visible">${icons[t.icon]}${t.side ? '<path d="M51 51h6l-3 4z" fill="#666"/>' : ''}</svg>` +
    t.lines.map(([s, w]) => `<span data-w="${w}">${s}</span>`).join('') + (t.caret ? '<i class="caret"></i>' : '') + '</div>').join('') +
  (stack ? `<div class="stack" style="margin-left:${title === 'Model Review' ? 6 : 1}px">${stack.map(([s, w]) => `<span data-w="${w}">${s}</span>`).join('')}</div>` : '') +
  `</div><div class="panel-title"><span data-w="${tw}">${title}</span>${drop ? '<i class="caret"></i>' : ''}</div></div>`).join('');

/* Project browser expanders */
$('nodes').innerHTML = [[10, 202, 1], [30, 220], [30, 238], [30, 256], [10, 274], [10, 310], [10, 328], [10, 346], [10, 364]].map(([x, y, open]) =>
  `<rect x="${x - 3.5}" y="${y - 3.5}" width="8" height="8" fill="#f4f4f4" stroke="#8a8a8a" stroke-width="1"/><path d="M${x - 2} ${y + .5}h5${open ? '' : `M${x + .5} ${y - 2}v5`}" stroke="#26509a" stroke-width="1"/>`).join('');

/* Assembly codes: code, checked, description, text width */
const rows = [['00'], ['16.10', 1, 'funderingsconstructies; voeten en balken, algemeen (verzamelniveau)', 384], ['1B.22.22.11'], ['1D.21.12.21'], ['1D.31.20.31'], ['21.0'],
  ['21.10', 0, 'buitenwanden; niet constructief, algemeen (verzamelniveau)', 324], ['21.11', 0, 'buitenwanden; niet constructief, massieve wanden', 268], ['21.13', 0, 'buitenwanden; niet constructief, systeemwanden', 260],
  ['21.20', 1, 'buitenwanden; constructief, algemeen (verzamelniveau)', 298], ['21.21', 1, 'buitenwanden; constructief, massieve wanden', 243], ['21.80'],
  ['22.11', 0, 'binnenwanden; niet constructief, massieve wanden', 271], ['22.21', 0, 'binnenwanden; constructief, massieve wanden', 246], ['23.10', 0, 'vloeren; niet constructief, algemeen (verzamelniveau)', 285],
  ['23.13', 0, 'vloeren; niet constructief, galerijen', 183], ['23.20', 1, 'vloeren; constructief, algemeen (verzamelniveau)', 259], ['23.22', 1, 'vloeren; constructief, balkons', 157],
  ['24.11', 0, 'trappen en hellingen; trappen, rechte steektrappen', 270], ['27.10', 0, 'daken; niet constructief, algemeen (verzamelniveau)', 277], ['27.16', 0, 'daken; niet constructief, gootconstructies', 220],
  ['28.10', 0, 'hoofddraagconstructies; kolommen en liggers, algemeen (verzamelniveau)', 400], ['2D(31.41)'], ['31', 0, 'External wall openings', 117],
  ['31.10', 0, 'buitenwandopeningen; niet gevuld, algemeen (verzamelniveau)', 341], ['31.11', 0, 'buitenwandopeningen; niet gevuld, daglichtopeningen', 288], ['31.2'],
  ['31.24', 0, 'buitenwandopeningen; gevuld met ramen, ramen draaiend', 315], ['31.3'], ['31.30', 0, 'buitenwandopeningen; gevuld met deuren, algemeen (verzamelniveau)', 385]];
$('rows').innerHTML = rows.map(([c, on, d, w]) => `<div class="row"><span class="box">${on ? '<svg width="11" height="11"><path d="M1.500 5.500l3 3 5-6.500" fill="none" stroke="#222" stroke-width="1.300"/></svg>' : ''}</span><span class="code"><span data-w="${c.length > 10 ? 64.500 : c === '2D(31.41)' ? 54 : c.length === 5 ? 30 : c.length === 4 ? 23 : 13.500}">${c}</span></span>${d ? `<span class="desc" data-w="${w}">${d}</span>` : ''}</div>`).join('');

/* 3D model. Facades are drawn in sheared local coordinates: u along the wall, v down. */
const DARK = '#303030', MID = '#5f5f5f', LITE = '#747474', PALE = '#8e8e8e', S = .577;
const poly = (pts, fill, st = '#000') => `<polygon points="${pts}" fill="${fill}" stroke="${st}"/>`;
const rect = (u, v, w, h, f, st = '#000') => `<rect x="${u}" y="${v}" width="${w}" height="${h}" fill="${f}" stroke="${st}"/>`;
const face = (x, y, s, body) => `<g transform="matrix(1 ${s} 0 1 ${x} ${y})">${body}</g>`;
const H = 47.7;

/* cols: column edges with a material letter */
const fills = { d: DARK, m: MID, l: LITE, f: '#828282', b: '#202020', p: PALE };
function wall(cols, floors, ground, bandFill) {
  let o = '';
  for (let k = 0; k < floors; k++) {
    const g = k === floors - 1;
    for (const [a, b, m] of (g && ground) || cols) o += rect(a, k * H + 4, b - a, H - 4, fills[m]);
  }
  const W = cols[cols.length - 1][1];
  for (let k = 0; k < floors; k++) o += rect(0, k * H, W, 4.5, bandFill);
  return o;
}
const seq = (x0, scale, str) => { let p = x0; return str.split(' ').map(t => { const m = t[0], e = +t.slice(1); const r = [(p - x0) / scale, (e - x0) / scale, m]; p = e; return r; }); };

function balcony(x, y) {
  return poly(`${x},${y} ${x + 65},${y - 37} ${x + 88},${y - 24} ${x + 88},${y - 20} ${x + 24},${y + 17} ${x},${y + 3}`, '#55584c') +
    poly(`${x + 5},${y} ${x + 64},${y - 34} ${x + 84},${y - 24} ${x + 25},${y + 10}`, '#868878') +
    poly(`${x + 6},${y} ${x + 65},${y - 34} ${x + 72},${y - 30} ${x + 14},${y + 3}`, '#000', 'none') +
    `<path d="M${x + 3} ${y - 2}L${x + 63} ${y - 36}" stroke="#ddd" stroke-dasharray="2 2" fill="none"/>`;
}
let m = '';
/* back notches */
m += poly('1451,314 1483,333 1451,352', DARK) + poly('1457,325 1460,325 1460,350 1457,350', '#828282') + poly('1461,326 1471,332 1471,342 1461,347', LITE);
m += poly('1384,391 1433,419 1384,454', DARK) + poly('1390,401 1397,405 1397,440 1390,443', LITE) + poly('1398,404 1410,411 1410,424 1398,434', '#fff') + poly('1410,424 1413,433 1398,440 1398,433', MID);
m += poly('1235,534 1246,542 1235,549', DARK);
/* right wing, rear facade */
const R2 = seq(982, 2.45, 'm1038 b1044 l1062 m1093 b1100 l1149 m1190 b1198 l1238 m1280 b1287 l1336 m1369 b1376 l1393 d1434 b1442 l1467');
const gr = a => a.map(([x, y, f]) => [x, y, f === 'm' ? 'p' : f]);
m += poly('1560,605 1738,507 1738,514 1560,617', '#4a4a4a') + poly('1560,597 1729,503 1738,507 1560,609', MID);
m += face(1530.8, 470.5, -.581, wall(R2, 3, gr(R2), LITE) + rect(0, 143.5, 198, 6, '#c3dcc4'));
for (const k of [0, 1, 2]) { const y = 402 + k * H; m += poly(`1699,${y - 8} 1715,${y + 1} 1715,${y + 9} 1699,${y + 18}`, k === 2 ? PALE : MID); }
m += balcony(1537, 516) + balcony(1537, 565);
/* right wing, street facade */
m += poly('1250,845 1587,652 1587,658 1250,851', '#4a4a4a') + poly('1250,840 1579,647 1587,652 1250,845', MID);
const R1 = seq(293, 2.45, 'l386 m428 b436 l452 m484 b491 l540 m583 b590 l628 m670 b677 l726 m757 b766 l783 m824 b831 l873 m915 b922 l970 m1001 b1008 l1028 m1070 b1077 l1100');
m += face(1249.6, 690.8, -S, wall(R1, 3, gr(R1), LITE) + rect(0, 143, 329.4, 7, '#c3dcc4') + `<path d="M101 5v13l17 16v-29zM300 5v14l17 17v-31z" fill="${DARK}" stroke="#000"/>`);
/* right wing roof */
m += poly('1553.3,254.6 1728.8,355.5 1530.8,470.5 1579,500.2 1249.6,690.8 1147.6,631.5 1228.8,583.2 1220.6,578 1220.6,556.3 1246.3,541.7 1234.9,534.2 1433.3,419.5 1383.9,390.7 1483.5,333.7 1451.2,313.9', MID);
m += poly('1451.2,314 1483.5,333.700 1480,336 1451.200,318.500', DARK) + poly('1384,391 1433,419.500 1429,422 1384,396', DARK);
m += poly('1220.6,578 1228.8,583.2 1220.6,588', DARK);
m += [[1308, 706.6], [1308, 754.8], [1388, 659.9], [1388, 708.6], [1486.7, 602.6], [1486.7, 650]].map(([x, y]) => balcony(x, y)).join('');
/* right wing, end facade */
m += poly('1143.7,782 1250,845 1250,852 1143.7,789', '#1e1e1e');
const E = [[0, 12, 'd'], [12, 15, 'f'], [15, 23, 'l'], [23, 50, 'd'], [50, 53, 'f'], [53, 70, 'm'], [70, 102, 'd']];
let end = E.map(([a, b, f]) => rect(a, 4, b - a, H - 4, fills[f])).join('');
end += rect(0, H, 102, H, MID) + rect(0, 2 * H, 102, H, PALE);
end += `<path d="M5 ${H}V${2 * H - 4}L40 ${H + 6}zM2 ${2 * H}V${3 * H - 4}L40 ${2 * H + 6}z" fill="${LITE}" stroke="#000"/>`;
end += rect(2, H, 3, H, DARK) + rect(0, 2 * H, 3, H, DARK) + rect(99, H, 3, 2 * H, DARK) + [0, 1, 2].map(k => rect(0, k * H, 102, 5, DARK)).join('') + rect(0, 143, 102, 7, '#56604f') + rect(-3, 150, 105, 4, MID);
m += face(1147.6, 631.5, .581, end);

/* left wing: foundations */
m += poly('637.5,543.5 646.5,538 735,594 735,600', MID) + poly('637.5,543.5 735,600 735,608 637.5,551.4', '#1e1e1e');
const A = [[0, 10.2, 'd'], [10.2, 13.5, 'f'], [13.5, 29.8, 'l'], [29.8, 50.2, 'd'], [50.2, 53, 'f'], [53, 64.9, 'm'], [64.9, 100, 'd']];
let fa = wall(A, 4, A.map(([a, b, f]) => [a, b, f === 'm' ? 'p' : f]), DARK);
for (let k = 0; k < 4; k++) { fa += `<path d="M13.500 ${k * H + 32}L29.800 ${k * H + 13}V${k * H + H}H13.500z" fill="${k === 3 ? PALE : MID}" stroke="#000"/>`; if (k < 3) fa += rect(73, k * H + 5, 2, 12, DARK) + rect(75.5, k * H + 5, 2.5, 13, PALE); }
fa += rect(0, 192, 90, 6, '#56604f');
m += face(646.5, 344.8, S, fa);
/* left wing, long facade */
m += poly('720.4,610.5 729.4,605 1082.4,808 1143,775 1143.7,782 1082.4,819', MID) + poly('720.4,610.5 1082.4,819 1082.4,826.3 720.4,618', '#1e1e1e') + poly('1082.4,819 1143.7,783 1143.7,791 1082.4,826.3', '#4a4a4a');
const B = seq(268, 2.45, 'd358 f366 m398 d448 f456 m496 d604 f612 m643 d690 f697 m738 d850 f857 m885 d936 f942 m983 d1029 f1036 m1054 d1072 f1079 m1110 d1133');
const Bg = seq(268, 2.45, 'd383 b387 p418 d625 b629 p661 d868 b872 p903 d1029 b1033 p1110 d1133');
let fb = wall(B, 4, Bg, DARK);
for (const u of [24, 124, 224]) for (let k = 0; k < 3; k++) fb += rect(u, k * H + 5, 2.5, 12, DARK) + rect(u + 2.5, k * H + 5, 3.5, 12, PALE) + rect(u + 2.5, k * H + 5, 1.5, 9, DARK);
for (let k = 0; k < 3; k++) fb += `<path d="M331.500 ${k * H + 14}l7-7 5-2v14l-5 5-7 2z" fill="${k === 2 ? PALE : '#6c6c6c'}" stroke="#000"/>`;
fb += rect(299, 2 * H + 5, 2, 42, '#111') + rect(0, 4 * H, 353, 7, '#56604f');
m += face(729.4, 412.5, S, fb);
/* left wing, short facade */
let fs = rect(0, 0, 137.600, H, LITE) + rect(0, H, 65, 3 * H, LITE) + rect(13, 3 * H + 4, 26.500, 43, PALE) + rect(39.500, 3 * H + 4, 3.500, 43, DARK);
for (let k = 0; k < 4; k++) fs += rect(0, k * H, k < 2 ? 137.600 : 65, 4.5, LITE);
fs += rect(0, 0, 3, 191, 'none') + rect(0, 4 * H, 65, 7, '#c3dcc4');
m += `<clipPath id="cs"><path d="M1082 500H1220.600V590L1147.600 632V830H1082z"/></clipPath><g clip-path="url(#cs)">${face(1082.4, 616.1, -S, fs)}</g>`;
/* left wing roof with its light well */
m += poly('768,275.500 646.500,344.800 746.500,402.800 729.400,412.500 1082.400,616.100 1183.300,558 1155.500,541.600 1191.400,520.500', MID);
m += poly('1155.5,541.6 1191.4,521 1220,538 1183.3,558.5', DARK) + poly('1175,531 1186.500,525 1186.500,557 1183,558 1175,553', '#fff') + poly('1187,524 1192,524 1192,553 1187,556', '#202020');
m += poly('1191.4,520 1220.600,538 1217,541 1191.400,525', LITE) + poly('1183.300,557 1217,538 1220.600,540 1183.300,561.5', LITE);
$('model').innerHTML = m;

/* Fit text runs to their measured widths */
document.querySelectorAll('[data-w]').forEach(e => {
  e.style.letterSpacing = '0';
  const n = e.textContent.length, d = +e.dataset.w - e.getBoundingClientRect().width;
  e.style.letterSpacing = d / n + 'px';
});
```
